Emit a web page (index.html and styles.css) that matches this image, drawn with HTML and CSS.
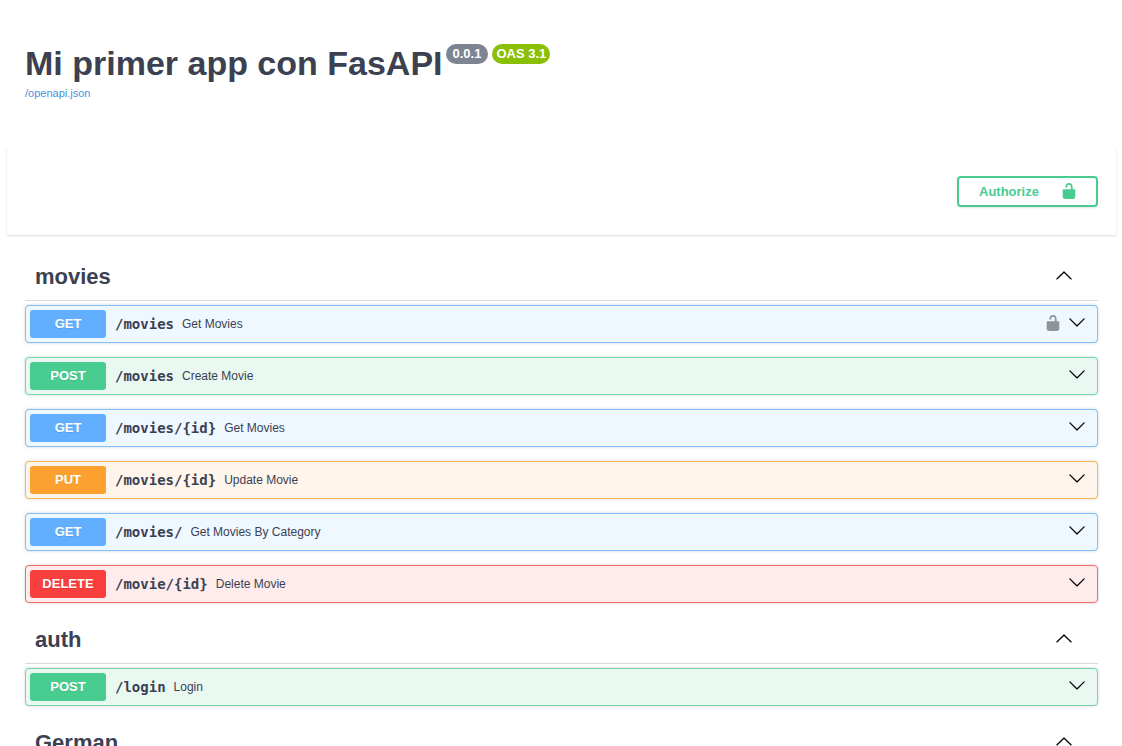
FILE: index.html
```html
<!DOCTYPE html>
<html lang="es">
<head>
<meta charset="utf-8">
<meta name="viewport" content="width=device-width, initial-scale=1">
<title>Mi primer app con FasAPI</title>
<link rel="stylesheet" href="styles.css">
</head>
<body>
<svg class="sprite" aria-hidden="true">
  <symbol id="unlocked" viewBox="0 0 20 20"><path d="M15.8 8H14V5.6C14 2.703 12.665 1 10 1 7.334 1 6 2.703 6 5.6V6h2v-.801C8 3.754 8.797 3 10 3c1.203 0 2 .754 2 2.199V8H4c-.553 0-1 .646-1 1.199V17c0 .549.428 1.139.951 1.307l1.197.387C5.672 18.861 6.55 19 7.1 19h5.8c.549 0 1.428-.139 1.951-.307l1.196-.387c.524-.167.953-.757.953-1.306V9.199C17 8.646 16.352 8 15.8 8z"/></symbol>
  <symbol id="arrow-down" viewBox="0 0 20 20"><path d="M17.418 6.109c.272-.268.709-.268.979 0s.271.701 0 .969l-7.908 7.83c-.27.268-.707.268-.979 0l-7.908-7.83c-.27-.268-.27-.701 0-.969.271-.268.709-.268.979 0L10 13.25l7.418-7.141z"/></symbol>
  <symbol id="arrow-up" viewBox="0 0 20 20"><path d="M17.418 14.908c.272.268.709.268.979 0s.271-.701 0-.969l-7.908-7.83c-.27-.268-.707-.268-.979 0l-7.908 7.83c-.27.268-.27.701 0 .969.271.268.709.268.979 0L10 7.767l7.418 7.141z"/></symbol>
</svg>

<header class="info">
  <h1 class="title">Mi primer app con FasAPI
    <span class="badges"><span class="badge">0.0.1</span><span class="badge badge-oas">OAS 3.1</span></span>
  </h1>
  <a class="spec-link" href="#">/openapi.json</a>
</header>

<section class="scheme">
  <button class="authorize" type="button">Authorize <svg class="icon-lock"><use href="#unlocked"/></svg></button>
</section>

<main class="operations">
  <section class="tag">
    <h2 class="tag-head">movies <button class="toggle" type="button" aria-label="Collapse movies"><svg class="icon-arrow"><use href="#arrow-up"/></svg></button></h2>
    <div class="op-list">
      <div class="op get">
        <span class="method">GET</span><span class="path">/movies</span><span class="summary">Get Movies</span>
        <button class="lock" type="button" aria-label="Authorization"><svg class="icon-lock"><use href="#unlocked"/></svg></button>
        <button class="toggle" type="button" aria-label="Expand"><svg class="icon-arrow"><use href="#arrow-down"/></svg></button>
      </div>
      <div class="op post">
        <span class="method">POST</span><span class="path">/movies</span><span class="summary">Create Movie</span>
        <button class="toggle" type="button" aria-label="Expand"><svg class="icon-arrow"><use href="#arrow-down"/></svg></button>
      </div>
      <div class="op get">
        <span class="method">GET</span><span class="path">/movies/{id}</span><span class="summary">Get Movies</span>
        <button class="toggle" type="button" aria-label="Expand"><svg class="icon-arrow"><use href="#arrow-down"/></svg></button>
      </div>
      <div class="op put">
        <span class="method">PUT</span><span class="path">/movies/{id}</span><span class="summary">Update Movie</span>
        <button class="toggle" type="button" aria-label="Expand"><svg class="icon-arrow"><use href="#arrow-down"/></svg></button>
      </div>
      <div class="op get">
        <span class="method">GET</span><span class="path">/movies/</span><span class="summary">Get Movies By Category</span>
        <button class="toggle" type="button" aria-label="Expand"><svg class="icon-arrow"><use href="#arrow-down"/></svg></button>
      </div>
      <div class="op delete">
        <span class="method">DELETE</span><span class="path">/movie/{id}</span><span class="summary">Delete Movie</span>
        <button class="toggle" type="button" aria-label="Expand"><svg class="icon-arrow"><use href="#arrow-down"/></svg></button>
      </div>
    </div>
  </section>

  <section class="tag">
    <h2 class="tag-head">auth <button class="toggle" type="button" aria-label="Collapse auth"><svg class="icon-arrow"><use href="#arrow-up"/></svg></button></h2>
    <div class="op-list">
      <div class="op post">
        <span class="method">POST</span><span class="path">/login</span><span class="summary">Login</span>
        <button class="toggle" type="button" aria-label="Expand"><svg class="icon-arrow"><use href="#arrow-down"/></svg></button>
      </div>
    </div>
  </section>

  <section class="tag">
    <h2 class="tag-head">German <button class="toggle" type="button" aria-label="Collapse German"><svg class="icon-arrow"><use href="#arrow-up"/></svg></button></h2>
  </section>
</main>
</body>
</html>
```
FILE: styles.css
```css
* {
  box-sizing: border-box;
}

html {
  scrollbar-width: none;
}

body {
  margin: 0;
  background: #fff;
  color: #3b4151;
  font-family: "Liberation Sans", Arial, sans-serif;
}

button {
  font-family: inherit;
  cursor: pointer;
}

.sprite {
  display: none;
}

.info {
  padding: 43px 24px 46px 25px;
}

.title {
  display: flex;
  align-items: flex-start;
  gap: 3px;
  margin: 0;
  font-size: 34px;
  line-height: 40px;
}

.badges {
  display: flex;
  gap: 4px;
  padding-top: 1px;
}

.badge {
  padding: 0 7px;
  border-radius: 10px;
  background: #7d8492;
  color: #fff;
  font-size: 13px;
  line-height: 20px;
}

.badge-oas {
  padding: 0 4px;
  background: #89bf04;
}

.spec-link {
  display: block;
  width: max-content;
  margin-top: 3px;
  color: #4990e2;
  font-size: 11px;
  line-height: 15px;
  text-decoration: none;
}

.scheme {
  display: flex;
  justify-content: flex-end;
  margin: 0 6px 0 7px;
  padding: 29px 18px 28px;
  box-shadow: 0 1px 2px rgba(0, 0, 0, 0.15);
}

.authorize {
  display: flex;
  align-items: center;
  justify-content: space-between;
  width: 141px;
  height: 31px;
  padding: 0 18px 0 20px;
  border: 2px solid #49cc90;
  border-radius: 4px;
  background: transparent;
  box-shadow: 0 1px 2px rgba(0, 0, 0, 0.1);
  color: #49cc90;
  font-size: 13px;
  font-weight: 700;
}

.icon-lock,
.icon-arrow {
  display: block;
  width: 18px;
  height: 18px;
  fill: currentColor;
}

.authorize .icon-lock,
.lock .icon-lock {
  margin-bottom: 2px;
}

.operations {
  padding: 18px 24px 0 25px;
}

.tag-head {
  display: flex;
  align-items: center;
  justify-content: space-between;
  height: 48px;
  margin: 0 0 4px;
  padding: 0 25px 0 10px;
  border-bottom: 1px solid #d8d9dc;
  font-size: 22px;
  line-height: 26px;
}

.op-list {
  display: flex;
  flex-direction: column;
  gap: 14px;
  padding-bottom: 13px;
}

.op {
  display: flex;
  align-items: center;
  height: 38px;
  padding: 0 11px 0 4px;
  border: 1px solid;
  border-radius: 4px;
  box-shadow: 0 0 3px rgba(0, 0, 0, 0.19);
}

.method {
  width: 76px;
  border-radius: 3px;
  color: #fff;
  font-size: 13px;
  font-weight: 700;
  line-height: 28px;
  text-align: center;
  text-shadow: 0 1px 0 rgba(0, 0, 0, 0.1);
}

.path {
  padding: 0 8px 0 9px;
  font-family: "DejaVu Sans Mono", monospace;
  font-size: 14px;
  font-weight: 700;
}

.summary {
  flex: 1;
  font-size: 12px;
}

.toggle,
.lock {
  padding: 0;
  border: 0;
  background: none;
  color: #000;
}

.toggle {
  padding-bottom: 4px;
}

.lock {
  margin-right: 6px;
  color: #8f9499;
}

.get {
  border-color: #84c0fb;
  background: #eff7ff;
}

.get .method {
  background: #61affe;
}

.post {
  border-color: #74d6a9;
  background: #e9f9f2;
}

.post .method {
  background: #49cc90;
}

.put {
  border-color: #fcb55e;
  background: #fff5ea;
}

.put .method {
  background: #fca130;
}

.delete {
  border-color: #f96b6b;
  background: #feebeb;
}

.delete .method {
  background: #f93e3e;
}
```
